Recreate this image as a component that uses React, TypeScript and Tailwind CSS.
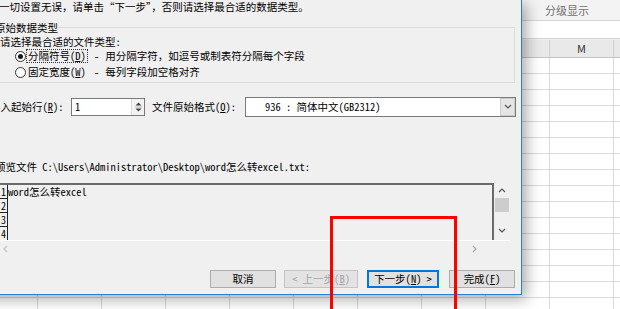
import React from "react";

const cols = ["E", "F", "G", "H", "I", "J", "K", "L", "M"];

function ExcelSheet() {
  return (
    <div className="flex flex-col font-['Noto_Sans_CJK_SC',sans-serif]">
      <div className="h-[21px] bg-[#f3f3f3] border-b border-[#d5d5d5] pl-[545px] text-[11px] leading-[20px] text-[#707070]">
        分级显示
      </div>
      <div className="h-[18px] bg-white border-b border-[#d5d5d5]" />
      <div className="h-[1px] bg-[#f0f0f0]" />
      <div className="flex h-[18px] bg-[#e9e9e9] border-b border-[#c4c4c4] text-[11px] leading-[17px] text-[#333]">
        <div className="w-[38px] shrink-0 border-r border-[#cfcfcf]" />
        {cols.map((c) => (
          <div key={c} className="w-[64px] shrink-0 border-r border-[#cfcfcf] text-center">
            {c}
          </div>
        ))}
        <div className="flex-1" />
      </div>
      {Array.from({ length: 16 }).map((_, r) => (
        <div key={r} className="flex h-[16px] border-b border-[#dadada]">
          <div className="w-[38px] shrink-0 border-r border-[#dadada]" />
          {cols.map((c) => (
            <div key={c} className="w-[64px] shrink-0 border-r border-[#dadada]" />
          ))}
          <div className="flex-1" />
        </div>
      ))}
    </div>
  );
}

function Chevron({ dir, color }: { dir: "up" | "down" | "left" | "right"; color: string }) {
  const d = {
    up: "M1 5 L4 2 L7 5",
    down: "M1 2 L4 5 L7 2",
    left: "M5 1 L2 4 L5 7",
    right: "M2 1 L5 4 L2 7",
  }[dir];
  return (
    <svg width="8" height="8" viewBox="0 0 8 8">
      <path d={d} fill="none" stroke={color} strokeWidth="1.2" />
    </svg>
  );
}

function Radio({ checked }: { checked?: boolean }) {
  return (
    <span className="w-[11px] h-[11px] shrink-0 rounded-full border border-[#333] bg-white flex items-center justify-center">
      {checked && <span className="w-[5px] h-[5px] rounded-full bg-[#1a1a1a]" />}
    </span>
  );
}

function Dialog() {
  return (
    <div className="absolute left-[-20px] top-0 w-[542px] h-[295px] bg-[#f0f0f0] border-r border-b border-[#2a7fd4] shadow-[4px_4px_14px_rgba(0,0,0,0.35)] text-[10.5px] text-black font-['Noto_Sans_Mono_CJK_SC','Noto_Sans_CJK_SC',monospace] whitespace-nowrap">
      <div className="h-[13px] leading-[13px] pl-[19px]">
        一切设置无误，请单击“下一步”，否则请选择最合适的数据类型。
      </div>

      <div className="relative ml-[8px] mt-[14px] w-[527px] h-[56px] border border-[#dcdcdc]">
        <span className="absolute left-[6px] top-[-7px] leading-[13px] bg-[#f0f0f0]">原始数据类型</span>
        <div className="pt-[7px] pl-[11px]">
          <div className="h-[14px] leading-[14px]">请选择最合适的文件类型:</div>
          <div className="h-[14px] flex items-center pl-[15px]">
            <Radio checked />
            <span className="w-[62px] shrink-0 h-[14px] leading-[12px] border border-dotted border-[#333] pl-[1px]">
              分隔符号(<span className="underline">D</span>)
            </span>
            <span className="ml-[6px]">-</span>
            <span className="ml-[6px]">用分隔字符，如逗号或制表符分隔每个字段</span>
          </div>
          <div className="h-[14px] mt-[2px] flex items-center pl-[15px]">
            <Radio />
            <span className="w-[62px] shrink-0 pl-[2px] leading-[14px]">
              固定宽度(<span className="underline">W</span>)
            </span>
            <span className="ml-[6px]">-</span>
            <span className="ml-[6px]">每列字段加空格对齐</span>
          </div>
        </div>
      </div>

      <div className="mt-[14px] h-[20px] flex items-center pl-[10px]">
        <span className="w-[81px] shrink-0">
          导入起始行(<span className="underline">R</span>):
        </span>
        <div className="w-[74px] h-[18px] shrink-0 bg-white border border-[#7a7a7a] flex items-center">
          <span className="flex-1 pl-[3px] leading-[16px]">1</span>
          <div className="w-[13px] h-[16px] flex flex-col items-center justify-center border-l border-[#d9d9d9] bg-[#f3f3f3]">
            <svg width="7" height="14" viewBox="0 0 7 14">
              <path d="M0.5 5.5 L3.5 2.5 L6.5 5.5 Z" fill="#444" />
              <path d="M0.5 8.5 L3.5 11.5 L6.5 8.5 Z" fill="#444" />
              <line x1="0" y1="7" x2="7" y2="7" stroke="#bbb" strokeWidth="1" />
            </svg>
          </div>
        </div>
        <span className="ml-[7px] w-[93px] shrink-0">
          文件原始格式(<span className="underline">O</span>):
        </span>
        <div className="w-[271px] h-[20px] shrink-0 bg-white border border-[#7a7a7a] flex items-center">
          <span className="flex-1 pl-[19px] leading-[18px]">936 : 简体中文(GB2312)</span>
          <div className="w-[15px] h-[18px] bg-[#e5e5e5] border border-[#cccccc] flex items-center justify-center">
            <Chevron dir="down" color="#555" />
          </div>
        </div>
      </div>

      <div className="mt-[43px] h-[14px] leading-[14px] pl-[15px]">
        预览文件 C:\Users\Administrator\Desktop\word怎么转excel.txt:
      </div>

      <div className="mt-[9px] ml-[8px] w-[522px] flex flex-col">
        <div className="flex h-[57px]">
          <div className="flex-1 bg-[#f0f0f0] border-t-2 border-r-2 border-[#6a6a6a] flex overflow-hidden">
            <div className="w-[20px] shrink-0 border-r border-[#222] flex flex-col">
              {["1", "2", "3", "4"].map((n) => (
                <div key={n} className="h-[14px] shrink-0 border-b border-[#222] text-right pr-[1px] leading-[14px] text-[10px]">
                  {n}
                </div>
              ))}
            </div>
            <div className="leading-[14px]">word怎么转excel</div>
          </div>
          <div className="w-[16px] shrink-0 flex flex-col items-center">
            <div className="h-[14px] flex items-center justify-center mt-[1px]">
              <Chevron dir="up" color="#555" />
            </div>
            <div className="w-[14px] h-[14px] bg-[#cdcdcd]" />
            <div className="flex-1" />
            <div className="h-[14px] flex items-center justify-center mb-[2px]">
              <Chevron dir="down" color="#555" />
            </div>
          </div>
        </div>
        <div className="h-[16px] border-t border-white flex items-center justify-between pl-[14px] pr-[31px]">
          <Chevron dir="left" color="#c4c4c4" />
          <Chevron dir="right" color="#a8a8a8" />
        </div>
      </div>

      <div className="mt-[14px] flex pl-[230px] h-[18px]">
        <button className="w-[66px] h-[18px] bg-[#e1e1e1] border border-[#adadad] leading-[16px]">取消</button>
        <button className="ml-[8px] w-[74px] h-[18px] bg-[#e3e3e3] border border-[#c4c4c4] text-[#a3a3a3] leading-[16px]">
          &lt; 上一步(<span className="underline">B</span>)
        </button>
        <button className="ml-[9px] w-[72px] h-[18px] bg-[#e1e1e1] border border-[#0078d7] shadow-[inset_0_0_0_1px_#0078d7] leading-[16px]">
          下一步(<span className="underline">N</span>) &gt;
        </button>
        <button className="ml-[10px] w-[66px] h-[18px] bg-[#e1e1e1] border border-[#adadad] leading-[16px]">
          完成(<span className="underline">F</span>)
        </button>
      </div>
    </div>
  );
}

export default function App() {
  return (
    <div className="relative w-[620px] h-[309px] overflow-hidden bg-white">
      <ExcelSheet />
      <Dialog />
      <div className="absolute left-[330px] top-[216px] w-[127px] h-[100px] border-[3px] border-[#ff0000]" />
    </div>
  );
}
